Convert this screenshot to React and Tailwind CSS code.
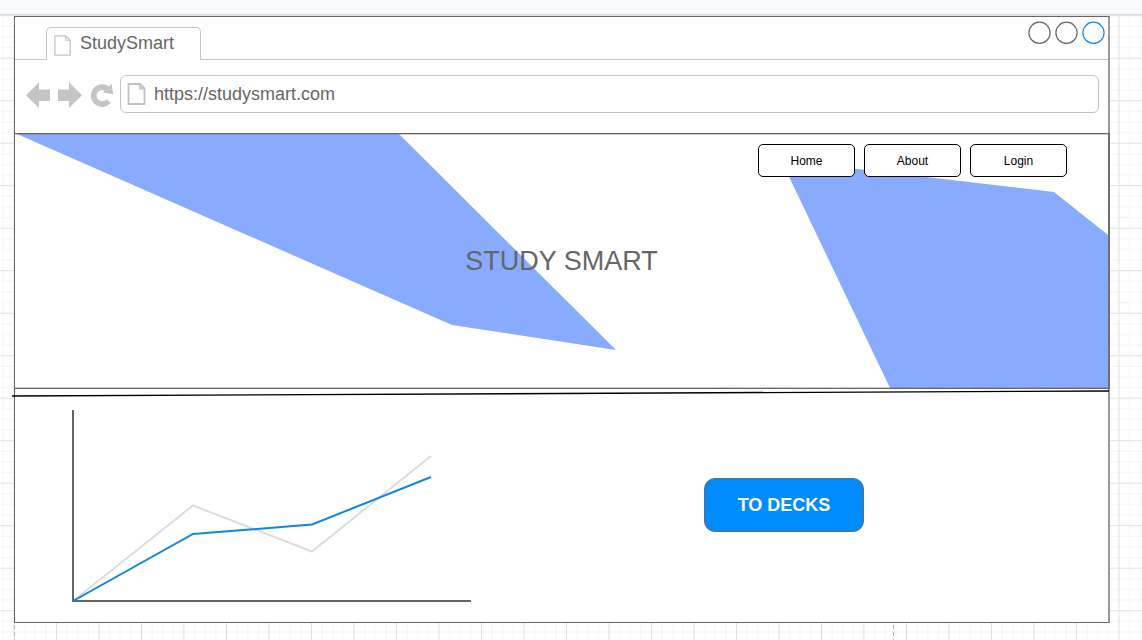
import React from "react";

function CanvasGrid() {
  return (
    <svg className="absolute inset-0 h-full w-full" aria-hidden="true">
      <defs>
        <pattern id="grid" x="13.5" y="15.2" width="42.5" height="42.5" patternUnits="userSpaceOnUse">
          <path
            d="M11.1 0V42.5M21.7 0V42.5M32.4 0V42.5M0 11.1H42.5M0 21.7H42.5M0 32.4H42.5"
            stroke="#f4f4f4"
            strokeWidth="1"
            fill="none"
          />
          <path d="M0.5 0V42.5M0 0.5H42.5" stroke="#e0e0e0" strokeWidth="1" fill="none" />
        </pattern>
      </defs>
      <rect width="100%" height="100%" fill="url(#grid)" />
      <path d="M14.5 625V640M893.5 625V640" stroke="#b5b5b5" strokeWidth="1" strokeDasharray="4 3" fill="none" />
    </svg>
  );
}

function PageIcon({ className, strokeWidth }) {
  return (
    <svg className={className} viewBox="0 0 18 22" fill="none" stroke="#c4c4c4" strokeWidth={strokeWidth} aria-hidden="true">
      <path d="M1 1H12.5L17 5.5V21H1Z" />
      <path d="M12.5 1V5.5H17" />
    </svg>
  );
}

function WindowCircle({ label, color }) {
  return (
    <button type="button" aria-label={label}>
      <svg className="size-[23px]" viewBox="0 0 23 23" fill="none" aria-hidden="true">
        <circle cx="11.5" cy="11.8" r="10.6" stroke={color} strokeWidth="1.2" />
      </svg>
    </button>
  );
}

function TabStrip() {
  return (
    <div className="flex h-[43px] items-end justify-between border-b border-[#c4c4c4] pr-[3px] pl-[31px]">
      <div className="-mb-px flex h-[33px] w-[155px] items-center gap-2 rounded-t-[5px] border-x border-t border-[#c4c4c4] bg-white pb-0.5 pl-1.5 text-lg">
        <PageIcon className="mt-1 h-[21px] w-[19px] shrink-0" strokeWidth="1.3" />
        <span>StudySmart</span>
      </div>
      <div className="flex gap-1 self-start pt-1">
        <WindowCircle label="Minimize" color="#666666" />
        <WindowCircle label="Maximize" color="#666666" />
        <WindowCircle label="Close" color="#0f8ae8" />
      </div>
    </div>
  );
}

function Toolbar() {
  return (
    <div className="flex h-[73px] items-start pt-[15px] pr-[9px] pl-[11px]">
      <div className="mr-1.5 flex h-10 items-center gap-2">
        <button type="button" aria-label="Back">
          <svg className="h-[26px] w-6" viewBox="0 0 24 26" fill="#c4c4c4" aria-hidden="true">
            <path d="M0 13.3L13 0.3V7.5H24V19.1H13V26Z" />
          </svg>
        </button>
        <button type="button" aria-label="Forward">
          <svg className="h-[26px] w-6" viewBox="0 0 24 26" fill="#c4c4c4" aria-hidden="true">
            <path d="M24 13.3L11 0.3V7.5H0V19.1H11V26Z" />
          </svg>
        </button>
        <button type="button" aria-label="Reload">
          <svg className="h-[26px] w-6" viewBox="0 0 24 26" aria-hidden="true">
            <path
              d="M18.6 19.2A8.5 8.5 0 1 1 18.2 7.6"
              fill="none"
              stroke="#c4c4c4"
              strokeWidth="5.6"
            />
            <path d="M21.6 1.8L23.2 12.2L12.8 10.6Z" fill="#c4c4c4" />
          </svg>
        </button>
      </div>
      <label className="flex h-[38px] min-w-0 flex-1 items-center gap-2 rounded-md border border-[#c4c4c4] bg-white pl-1.5">
        <PageIcon className="h-[22px] w-[19px] shrink-0" strokeWidth="1.9" />
        <input
          type="text"
          aria-label="Address"
          defaultValue="https://studysmart.com"
          className="min-w-0 flex-1 bg-transparent text-lg outline-none"
        />
      </label>
    </div>
  );
}

function Hero() {
  return (
    <section className="relative -mr-0.5 h-64 border-y border-r-2 border-y-[#666666] border-r-[#707070]">
      <svg className="absolute inset-0 h-full w-full" viewBox="0 0 1093 254" preserveAspectRatio="none" aria-hidden="true">
        <path d="M2 0H384L601 216L437 191Z" fill="#88aaff" />
        <path d="M766 26L1039 58L1093 101V254H875Z" fill="#88aaff" />
        <path d="M0 0.2H1093M0 253.8H1093" stroke="#666666" strokeOpacity="0.6" strokeWidth="0.8" />
      </svg>
      <div className="relative">
        <nav className="flex justify-end gap-[9px] pt-2.5 pr-[41px] text-xs text-black">
          {["Home", "About", "Login"].map((name) => (
            <button
              key={name}
              type="button"
              className="h-[33px] w-[97px] rounded-[5px] border border-black bg-white"
            >
              {name}
            </button>
          ))}
        </nav>
        <h1 className="pt-[68px] text-center text-[27px] leading-8">STUDY SMART</h1>
      </div>
    </section>
  );
}

function Divider() {
  return (
    <svg
      className="absolute top-[373px] -left-[3px] h-2 w-[calc(100%+4px)]"
      viewBox="0 0 1097 8"
      preserveAspectRatio="none"
      aria-hidden="true"
    >
      <path d="M0 6L1097 1" stroke="#000000" strokeWidth="1.4" />
    </svg>
  );
}

function Progress() {
  return (
    <section className="flex items-start gap-[232px] pt-[21px] pb-5 pl-[57px]">
      <svg className="h-48 w-[400px]" viewBox="0 0 400 192" fill="none" role="img" aria-label="Progress chart">
        <path d="M1 191L121 95.5L240 141.5L359 46" stroke="#dddddd" strokeWidth="2" />
        <path d="M1 0V191H399" stroke="#666666" strokeWidth="2" />
        <path d="M1 191L121 124L240 114.5L359 67" stroke="#0f87de" strokeWidth="2" />
      </svg>
      <button
        type="button"
        className="mt-[68px] h-[54px] w-40 rounded-[11px] border border-[#5f6b78] bg-[#008cff] text-lg font-bold text-white"
      >
        TO DECKS
      </button>
    </section>
  );
}

export default function App() {
  return (
    <div className="relative min-h-screen overflow-hidden bg-white pb-[17px] font-['Liberation_Sans',Arial,sans-serif] text-[#666666]">
      <CanvasGrid />
      <div className="relative h-[15px] border-b border-[#dcdcdc] bg-[#f8f9fb]" />
      <main className="relative mt-px mr-8 ml-3.5 border-y border-r-2 border-l border-y-[#666666] border-r-[#999999] border-l-[#666666] bg-white">
        <TabStrip />
        <Toolbar />
        <Hero />
        <Progress />
        <Divider />
      </main>
    </div>
  );
}
